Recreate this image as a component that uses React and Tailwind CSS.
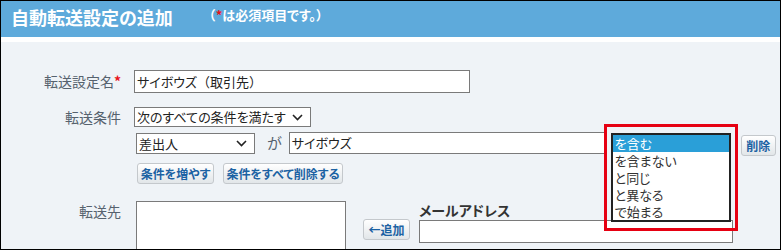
import React from "react";

function Chevron() {
  return (
    <svg width="11" height="7" viewBox="0 0 11 7" className="shrink-0">
      <polyline points="1,1 5.5,5.5 10,1" fill="none" stroke="#222" strokeWidth="1.6" />
    </svg>
  );
}

function Button({ children, className = "" }) {
  return (
    <button
      className={
        "h-[21px] flex items-center justify-center whitespace-nowrap rounded-[3px] border border-[#c4c8cc] bg-gradient-to-b from-white to-[#e2e6e9] text-[12px] font-bold text-[#1c62a3] leading-none " +
        className
      }
    >
      {children}
    </button>
  );
}

const options = ["を含む", "を含まない", "と同じ", "と異なる", "で始まる"];

export default function App() {
  return (
    <div className="w-[781px] h-[250px] overflow-hidden border border-black bg-[#eff3f7] font-['Noto_Sans_CJK_JP','Noto_Sans',sans-serif] [font-feature-settings:'palt']">

      {/* Header */}

      <div className="h-[36px] bg-[#5eaadb] flex items-start pl-[10px] pt-[3px] text-white">
        <h1 className="text-[18px] font-bold leading-[26px]">自動転送設定の追加</h1>
        <span className="ml-[30px] text-[13px] font-bold leading-[22px] [font-feature-settings:normal]">
          （<span className="text-[#e8141c]">*</span>
          <span className="[font-feature-settings:'palt']">は必須項目です。</span>）
        </span>
      </div>

      <div className="h-[5px] bg-white"></div>

      {/* Form */}

      <div className="pt-[28px] text-[13px] text-[#222]">

        {/* 転送設定名 */}

        <div className="flex items-center h-[23px]">
          <div className="w-[120px] text-right text-[14px] text-[#56626e]">
            転送設定名<span className="text-[#e8141c] font-bold">*</span>
          </div>
          <div className="ml-[13px] w-[336px] h-[23px] border border-[#7a7a7a] bg-white px-[2px] flex items-center">
            サイボウズ<span className="[font-feature-settings:normal]">（取引先）</span>
          </div>
        </div>

        {/* 転送条件 */}

        <div className="mt-[14px] flex items-center h-[20px]">
          <div className="w-[120px] text-right text-[14px] text-[#56626e]">転送条件</div>
          <div className="ml-[13px] w-[177px] h-[20px] border border-[#7a7a7a] bg-white pl-[2px] pr-[7px] flex items-center justify-between">
            次のすべての条件を満たす
            <Chevron />
          </div>
        </div>

        <div className="mt-[5px] flex items-start pl-[135px] h-[22px]">
          <div className="mt-[1px] w-[119px] h-[21px] border border-[#7a7a7a] bg-white pl-[2px] pr-[7px] flex items-center justify-between">
            差出人
            <Chevron />
          </div>
          <span className="ml-[12px] text-[15px] text-[#56626e] leading-[22px]">が</span>
          <div className="ml-[7px] w-[318px] h-[22px] border border-[#7a7a7a] bg-white px-[2px] flex items-center">
            サイボウズ
          </div>

          {/* Opened list */}

          <div className="relative ml-[4px] w-[120px] h-[22px]">
            <div className="absolute left-[-7px] top-[-8px] w-[134px] h-[107px] border-[3px] border-[#e60012] z-10"></div>
            <div className="absolute left-0 top-[1px] w-[120px] h-[89px] border-2 border-[#222] bg-white z-20 overflow-hidden">
              {options.map((o, i) => (
                <div
                  key={o}
                  className={
                    "h-[17px] pl-[2px] text-[13px] leading-[17px] overflow-hidden " +
                    (i === 0 ? "bg-[#2a9fd8] text-white" : "text-[#333]")
                  }
                >
                  {o}
                </div>
              ))}
            </div>
          </div>

          <Button className="ml-[10px] mt-[3px] w-[35px] h-[20px]">削除</Button>
        </div>

        {/* Condition buttons */}

        <div className="mt-[9px] flex gap-[9px] pl-[136px]">
          <Button className="w-[77px]">条件を増やす</Button>
          <Button className="w-[120px]">条件をすべて削除する</Button>
        </div>

        {/* 転送先 */}

        <div className="mt-[17px] flex items-start">
          <div className="w-[120px] text-right text-[14px] text-[#56626e] leading-[18px] mt-[1px]">転送先</div>
          <div className="ml-[15px] w-[210px] h-[60px] border border-[#7a7a7a] bg-white"></div>
          <Button className="ml-[17px] mt-[18px] w-[47px]">←追加</Button>
          <div className="ml-[9px] flex flex-col">
            <div className="text-[14px] font-bold text-[#333] leading-[19px]">メールアドレス</div>
            <div className="w-[314px] h-[23px] border border-[#7a7a7a] bg-white"></div>
          </div>
        </div>

      </div>
    </div>
  );
}
